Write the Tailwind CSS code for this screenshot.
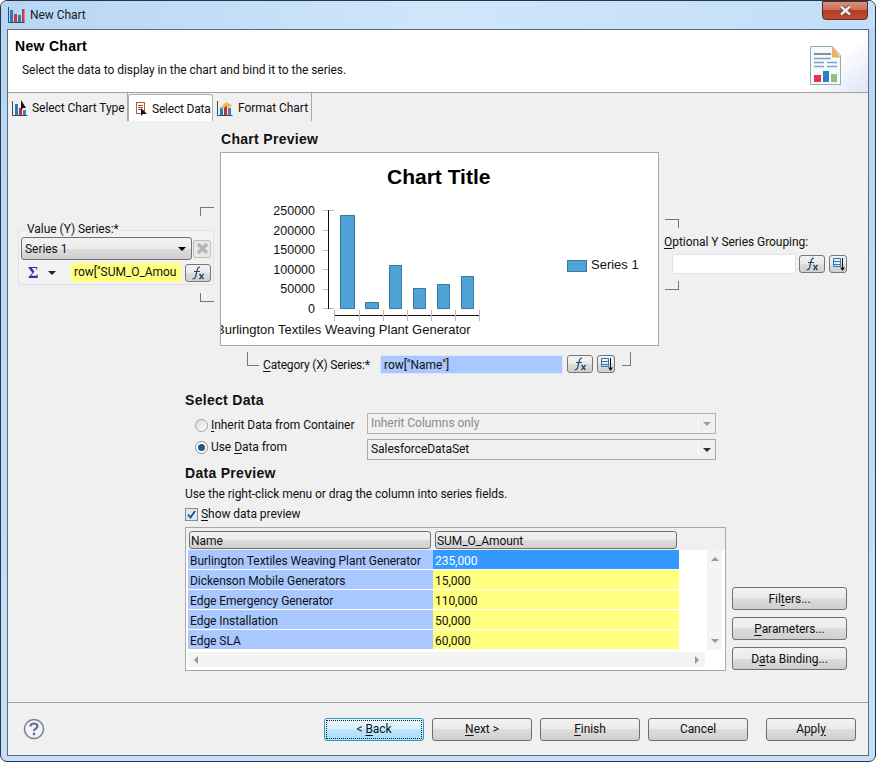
<!DOCTYPE html>
<html><head><meta charset="utf-8"><script src="https://cdn.jsdelivr.net/npm/@tailwindcss/browser@4"></script></head>
<body class="m-0 bg-white">
<div class="w-[876px] h-[762px] overflow-hidden flex flex-col rounded-[7px] border border-[#2a3444] bg-gradient-to-b from-[#b5d6f5] to-[#c5e0f8] font-['Roboto',sans-serif] text-[12px] tracking-[-0.05px] text-[#111]">
  <div class="h-[28px] shrink-0 flex items-center pl-[7px] pr-[7px] bg-gradient-to-r from-[#b6d6f4] via-[#cfe6fb] to-[#c2def8]">
    <svg width="17" height="16" viewBox="0 0 17 16"><path d="M.5 0v15.500h16" fill="none" stroke="#3a4a60"/><rect x="2" y="3" width="3" height="12" fill="#2a7ac0"/><rect x="6" y="7" width="3" height="8" fill="#c8403a"/><rect x="10" y="8" width="3" height="7" fill="#3a78b8"/><rect x="14" y="2" width="2.500" height="13" fill="#c8403a"/></svg>
    <span class="ml-[5px] text-[#1a1a1a]">New Chart</span>
    <div class="ml-auto -mt-[9px] w-[46px] h-[19px] rounded-b-[4px] border border-[#5a2a24] bg-[linear-gradient(#d9907e_0%,#cf6f58_45%,#b83a22_50%,#c04a32_100%)] flex items-center justify-center">
      <svg width="15" height="11" viewBox="0 0 15 11"><path d="M3 1.500l9 8M12 1.500l-9 8" stroke="#5a3a3a" stroke-width="4"/><path d="M3 1.500l9 8M12 1.500l-9 8" stroke="#eee" stroke-width="2.400"/></svg>
    </div>
  </div>
  <div class="mx-[6px] w-[862px] h-[727px] shrink-0 border border-[#5f6c7c] bg-[#f0f0f0] flex flex-col">
    <div class="h-[62px] bg-white border-b border-[#a0a0a0] flex shrink-0 box-content">
      <div class="pl-[7px] pt-[8px] flex-1">
        <div class="font-bold font-['Liberation_Sans',sans-serif] text-[14px] tracking-[0.3px] leading-[16px] text-black">New Chart</div>
        <div class="ml-[7px] mt-[8px] leading-[16px]">Select the data to display in the chart and bind it to the series.</div>
      </div>
      <div class="w-[70px] bg-gradient-to-br from-white via-white to-[#dfe5f2] flex items-end justify-start pl-[12px] pb-[7px]">
        <svg width="31" height="39" viewBox="0 0 31 39"><path d="M.5.500h22l8 9v29H.5z" fill="#f6fafa" stroke="#8fb0b0"/><path d="M22 .500l8.500 11H22z" fill="#eeb060"/><rect x="4" y="7" width="17" height="2" fill="#8a8a9c"/><path d="M4 12.500h17M4 16.500h10M17 16.500h10M4 20.500h10M17 20.500h10" stroke="#7aa4cc" stroke-width="1.500"/><rect x="4" y="29" width="7" height="7" fill="#e83050"/><rect x="13" y="25" width="6" height="11" fill="#2a80c8"/><rect x="21" y="28" width="6" height="8" fill="#90c080"/></svg>
      </div>
    </div>
    <div class="h-[28px] shrink-0 flex items-stretch bg-[#f0f0f0] pl-[1px]">
      <div class="w-[119px] flex items-center pl-[3px] pt-[1px] gap-[4px] border-r border-[#a8a8a8] whitespace-nowrap"><svg width="16" height="16" viewBox="0 0 16 16"><path d="M.5 1v14.500h15" fill="none" stroke="#3a4a60"/><rect x="3" y="4" width="3" height="11" fill="#2a7ac0"/><rect x="7" y="8" width="3" height="7" fill="#c03030"/><rect x="11" y="10" width="3" height="5" fill="#4080c0"/><path d="M9 0v10l2-2 3 0z" fill="#111"/></svg><span>Select Chart Type</span></div>
      <div class="w-[85px] mt-[1px] flex items-center pl-[6px] pt-[1px] gap-[3px] bg-white border border-b-0 border-[#b0b0b0] rounded-t-[3px] whitespace-nowrap"><svg width="14" height="16" viewBox="0 0 14 16"><rect x="1.500" y="1.500" width="8" height="11" fill="#fff" stroke="#b06030"/><path d="M3 4.500h5M3 6.500h5M3 8.500h3" stroke="#c04040"/><path d="M6 7v8l2-2 4 0z" fill="#111"/></svg><span class="tracking-[-0.2px]">Select Data</span></div>
      <div class="w-[99px] flex items-center pl-[4px] pt-[1px] gap-[5px] border-r border-[#a8a8a8] whitespace-nowrap"><svg width="16" height="16" viewBox="0 0 16 16"><path d="M.5 1v14.500h15" fill="none" stroke="#3a4a60"/><rect x="3" y="7" width="3" height="8" fill="#2a7ac0"/><rect x="7" y="6" width="3" height="9" fill="#c03030"/><rect x="11" y="8" width="3" height="7" fill="#4080c0"/><path d="M3 8l6-6 6 3-3 3-3-2-3 3z" fill="#e8c050"/></svg><span>Format Chart</span></div>
    </div>
    <div class="flex-1 flex flex-col min-h-0">
      <div class="h-[231px] shrink-0 flex">
        <div class="w-[212px] shrink-0 pl-[10px] pt-[86px]">
          <div class="w-[196px] flex justify-end"><div class="w-[14px] h-[9px] border-l border-t border-[#777]"></div></div>
          <div class="relative mt-[14px] w-[196px] h-[55px] border border-[#dde0e6] rounded-[2px] pl-[2px] pt-[6px] bg-[#f2f2f2]">
            <div class="absolute -top-[9px] left-[7px] px-[1px] bg-[#f0f0f0] leading-[14px]">Value (Y) Series:*</div>
            <div class="flex items-center gap-[1px]">
              <div class="w-[171px] h-[23px] rounded-[3px] border border-[#707070] bg-[linear-gradient(#f2f2f2_0%,#ebebeb_50%,#dddddd_50%,#cfcfcf_100%)] flex items-center pl-[3px] justify-between pr-[5px]"><span>Series 1</span><span class="w-0 h-0 border-x-[4px] border-x-transparent border-t-[4px] border-t-black"></span></div>
              <div class="w-[18px] h-[18px] rounded-[2px] border border-[#bdbdbd] bg-[#e8e8e8] flex items-center justify-center"><svg width="13" height="13" viewBox="0 0 13 13"><path d="M2 2l9 9M11 2l-9 9" stroke="#b5b5b5" stroke-width="3.500"/></svg></div>
            </div>
            <div class="flex items-center mt-[3px] h-[19px]">
              <span class="w-[22px] pl-[7px] text-[16px] font-bold text-[#3030a0] font-['Liberation_Serif',serif] leading-none shrink-0">Σ</span>
              <span class="ml-[5px] w-0 h-0 border-x-[4px] border-x-transparent border-t-[4px] border-t-[#222] shrink-0"></span>
              <div class="ml-[15px] w-[110px] h-[19px] bg-[#ffff80] pl-[3px] whitespace-nowrap leading-[19px] shrink-0">row["SUM_O_Amou</div>
              <div class="ml-[4px] w-[26px] h-[18px] shrink-0 rounded-[3px] border border-[#777] bg-[linear-gradient(#f2f2f2_0%,#ebebeb_50%,#dddddd_50%,#cfcfcf_100%)] flex items-center justify-center"><svg width="16" height="14" viewBox="0 0 16 14"><path d="M10 1c-2 0-2.500 1-3 3.500L5.500 11c-.4 1.500-1 2-3 2M4 5.500h6" fill="none" stroke="#24476e" stroke-width="1.200"/><path d="M9.500 8l4 5M13.500 8l-4 5" stroke="#24476e" stroke-width="1.300"/></svg></div>
            </div>
          </div>
          <div class="w-[196px] flex justify-end mt-[8px]"><div class="w-[14px] h-[9px] border-l border-b border-[#777]"></div></div>
        </div>
        <div class="w-[439px] shrink-0">
          <div class="font-bold font-['Liberation_Sans',sans-serif] text-[14px] tracking-[0.3px] leading-[16px] mt-[10px] pl-[1px] text-[#111]">Chart Preview</div>
          <div class="relative mt-[5px] w-[439px] h-[194px] bg-white border border-[#a8a8a8] font-['Liberation_Sans',sans-serif] tracking-normal overflow-hidden">
            <div class="absolute left-[166px] top-[12px] font-bold text-[21px] leading-[24px] text-black">Chart Title</div>
            <div class="absolute left-[44px] top-[49px] w-[50px] text-right text-[12.500px] text-[#111] leading-[19.600px]">250000<br>200000<br>150000<br>100000<br>50000<br>0</div>
            <svg class="absolute left-0 top-0" width="437" height="192" viewBox="0 0 437 192">
              <path d="M102 57.500h11M102 77.500h5M102 97.500h5M102 116.500h5M102 136.500h5M102 155.500h11" stroke="#bbb" fill="none"/>
              <path d="M107.500 57v99" stroke="#111" fill="none"/>
              <path d="M113 162.500h145" stroke="#111" fill="none"/>
              <path d="M113.500 157v11M138.500 157v11M162.500 157v11M186.500 157v11M210.500 157v11M234.500 157v11M258.500 157v11" stroke="#bbb" fill="none"/>
              <g fill="#4fa3d9" stroke="#3d789f"><rect x="119.500" y="62.500" width="14" height="93"/><rect x="144.500" y="149.500" width="13" height="6"/><rect x="168.500" y="112.500" width="12" height="43"/><rect x="192.500" y="135.500" width="12" height="20"/><rect x="216.500" y="131.500" width="12" height="24"/><rect x="240.500" y="123.500" width="12" height="32"/></g>
              <rect x="346.500" y="107.500" width="19" height="11" fill="#4fa3d9" stroke="#3d789f"/>
            </svg>
            <div class="absolute left-[-5px] top-[168px] text-[13px] leading-[18px] whitespace-nowrap text-[#111]">Burlington Textiles Weaving Plant Generator</div>
            <div class="absolute left-[370px] top-[104px] text-[13px] leading-[16px] whitespace-nowrap text-[#111]">Series 1</div>
          </div>
        </div>
        <div class="pl-[6px] pt-[98px] flex-1">
          <div class="w-[14px] h-[9px] border-r border-t border-[#777]"></div>
          <div class="mt-[6px] -ml-[1px] leading-[16px] whitespace-nowrap"><u class="underline-offset-2">O</u>ptional Y Series Grouping:</div>
          <div class="mt-[4px] pl-[7px] flex items-center">
            <div class="w-[124px] h-[20px] bg-white border border-[#dfe3e8] rounded-[2px] shrink-0"></div>
            <div class="ml-[3px] w-[26px] h-[18px] shrink-0 rounded-[3px] border border-[#777] bg-[linear-gradient(#f2f2f2_0%,#ebebeb_50%,#dddddd_50%,#cfcfcf_100%)] flex items-center justify-center"><svg width="16" height="14" viewBox="0 0 16 14"><path d="M10 1c-2 0-2.500 1-3 3.500L5.500 11c-.4 1.500-1 2-3 2M4 5.500h6" fill="none" stroke="#24476e" stroke-width="1.200"/><path d="M9.500 8l4 5M13.500 8l-4 5" stroke="#24476e" stroke-width="1.300"/></svg></div>
            <div class="ml-[4px] w-[18px] h-[18px] shrink-0 rounded-[3px] border border-[#777] bg-[linear-gradient(#f2f2f2_0%,#ebebeb_50%,#dddddd_50%,#cfcfcf_100%)] flex items-center justify-center"><svg width="14" height="15" viewBox="0 0 14 15"><path d="M2.500 1.500h7v8h-7zM2.500 4.500h7M2.500 7.500h7" fill="none" stroke="#2a7ab8"/><path d="M11.500 1v10" stroke="#111"/><path d="M9 10.500h5l-2.500 3.500z" fill="#111"/></svg></div>
          </div>
          <div class="mt-[7px] w-[14px] h-[9px] border-r border-b border-[#777]"></div>
        </div>
      </div>
      <div class="h-[27px] shrink-0 flex pl-[239px]">
        <div class="w-[12px] h-[14px] border-l border-b border-[#777] shrink-0"></div>
        <div class="ml-[4px] pt-[5px] leading-[16px] w-[117px] shrink-0 whitespace-nowrap tracking-[-0.2px]"><u class="underline-offset-2">C</u>ategory (X) Series:*</div>
        <div class="h-[19px] w-[183px] mt-[3px] shrink-0 bg-[#a8c8ff] pl-[3px] leading-[18px] border border-[#dde6f4]">row["Name"]</div>
        <div class="ml-[4px] mt-[3px] w-[26px] h-[18px] shrink-0 rounded-[3px] border border-[#777] bg-[linear-gradient(#f2f2f2_0%,#ebebeb_50%,#dddddd_50%,#cfcfcf_100%)] flex items-center justify-center"><svg width="16" height="14" viewBox="0 0 16 14"><path d="M10 1c-2 0-2.500 1-3 3.500L5.500 11c-.4 1.500-1 2-3 2M4 5.500h6" fill="none" stroke="#24476e" stroke-width="1.200"/><path d="M9.500 8l4 5M13.500 8l-4 5" stroke="#24476e" stroke-width="1.300"/></svg></div>
        <div class="ml-[4px] mt-[3px] w-[18px] h-[18px] shrink-0 rounded-[3px] border border-[#777] bg-[linear-gradient(#f2f2f2_0%,#ebebeb_50%,#dddddd_50%,#cfcfcf_100%)] flex items-center justify-center"><svg width="14" height="15" viewBox="0 0 14 15"><path d="M2.500 1.500h7v8h-7zM2.500 4.500h7M2.500 7.500h7" fill="none" stroke="#2a7ab8"/><path d="M11.500 1v10" stroke="#111"/><path d="M9 10.500h5l-2.500 3.500z" fill="#111"/></svg></div>
        <div class="ml-[7px] w-[9px] h-[14px] border-r border-b border-[#777] shrink-0"></div>
      </div>
      <div class="pl-[177px] pt-[13px]">
        <div class="font-bold font-['Liberation_Sans',sans-serif] text-[14px] tracking-[0.3px] leading-[16px]">Select Data</div>
        <div class="flex mt-[5px] w-[531px] items-start">
          <div class="w-[182px] shrink-0 pl-[10px] pt-[1px]">
            <div class="flex items-center h-[22px] gap-[3px]"><span class="w-[13px] h-[13px] rounded-full border border-[#a0a0a0] bg-gradient-to-br from-[#dcdcdc] to-white"></span><span><u class="underline-offset-2">I</u>nherit Data from Container</span></div>
            <div class="flex items-center h-[22px] gap-[3px]"><span class="w-[13px] h-[13px] rounded-full border border-[#8a8a8a] bg-white flex items-center justify-center"><span class="w-[7px] h-[7px] rounded-full bg-[#1c5a88]"></span></span><span>Use <u class="underline-offset-2">D</u>ata from</span></div>
          </div>
          <div class="flex-1">
            <div class="h-[21px] border border-[#b0b0b0] bg-[#f0f0f0] text-[#8a8a8a] pl-[3px] flex items-center justify-between"><span class="-mt-[2px]">Inherit Columns only</span><span class="w-[17px] h-full border-l border-[#fafafa] flex items-center justify-center"><span class="w-0 h-0 border-x-[4px] border-x-transparent border-t-[4px] border-t-[#a0a0a0]"></span></span></div>
            <div class="mt-[5px] h-[21px] border border-[#a8a8a8] bg-[#f0f0f0] pl-[3px] flex items-center justify-between"><span class="-mt-[2px]">SalesforceDataSet</span><span class="w-[17px] h-full border-l border-[#fafafa] flex items-center justify-center"><span class="w-0 h-0 border-x-[4px] border-x-transparent border-t-[4px] border-t-[#333]"></span></span></div>
          </div>
        </div>
        <div class="font-bold font-['Liberation_Sans',sans-serif] text-[14px] tracking-[0.3px] leading-[16px] mt-[5px]">Data Preview</div>
        <div class="leading-[16px] mt-[5px]">Use the right-click menu or drag the column into series fields.</div>
        <div class="flex items-center gap-[3px] h-[18px] mt-[3px]"><span class="w-[13px] h-[13px] border border-[#8a8a8a] bg-[#dce8f4] flex items-center justify-center"><svg width="11" height="11" viewBox="0 0 11 11"><path d="M2 5.500l2.500 3L9 2" fill="none" stroke="#2a4a8a" stroke-width="1.800"/></svg></span><span><u class="underline-offset-2">S</u>how data preview</span></div>
        <div class="flex mt-[4px] items-end">
          <div class="w-[541px] h-[144px] shrink-0 border border-[#a8a8a8] bg-white pl-[2px] flex flex-col">
            <div class="flex gap-[4px] h-[22px] shrink-0 bg-[#f0f0f0] -ml-[2px] pl-[3px] pt-[3px]">
              <div class="w-[242px] h-[18px] rounded-[3px] border border-[#707070] bg-[linear-gradient(#f2f2f2_0%,#ebebeb_50%,#dddddd_50%,#cfcfcf_100%)] pl-[1px] leading-[19px]">Name</div>
              <div class="w-[242px] h-[18px] rounded-[3px] border border-[#707070] bg-[linear-gradient(#f2f2f2_0%,#ebebeb_50%,#dddddd_50%,#cfcfcf_100%)] pl-[1px] leading-[19px]">SUM_O_Amount</div>
            </div>
            <div class="flex flex-1 min-h-0">
              <div class="w-[491px] flex flex-col shrink-0">
                <div class="h-[19px] flex mb-[1px]"><span class="w-[245px] bg-[#a8c8ff] pl-[2px] leading-[22px]">Burlington Textiles Weaving Plant Generator</span><span class="flex-1 bg-[#3399ff] text-white pl-[2px] leading-[22px]">235,000</span></div>
                <div class="h-[19px] flex mb-[1px]"><span class="w-[245px] bg-[#a8c8ff] pl-[2px] leading-[22px]">Dickenson Mobile Generators</span><span class="flex-1 bg-[#ffff80] pl-[2px] leading-[22px]">15,000</span></div>
                <div class="h-[19px] flex mb-[1px]"><span class="w-[245px] bg-[#a8c8ff] pl-[2px] leading-[22px]">Edge Emergency Generator</span><span class="flex-1 bg-[#ffff80] pl-[2px] leading-[22px]">110,000</span></div>
                <div class="h-[19px] flex mb-[1px]"><span class="w-[245px] bg-[#a8c8ff] pl-[2px] leading-[22px]">Edge Installation</span><span class="flex-1 bg-[#ffff80] pl-[2px] leading-[22px]">50,000</span></div>
                <div class="h-[19px] flex mb-[1px]"><span class="w-[245px] bg-[#a8c8ff] pl-[2px] leading-[22px]">Edge SLA</span><span class="flex-1 bg-[#ffff80] pl-[2px] leading-[22px]">60,000</span></div>
              </div>
              <div class="w-[28px] shrink-0"></div>
              <div class="w-[15px] h-[100px] bg-[#f4f4f4] flex flex-col items-center justify-between py-[7px]"><span class="w-0 h-0 border-x-[4px] border-x-transparent border-b-[4px] border-b-[#999]"></span><span class="w-0 h-0 border-x-[4px] border-x-transparent border-t-[4px] border-t-[#999]"></span></div>
            </div>
            <div class="h-[15px] w-[517px] mb-[3px] shrink-0 bg-[#f4f4f4] flex items-center justify-between px-[6px]"><span class="w-0 h-0 border-y-[4px] border-y-transparent border-r-[4px] border-r-[#999]"></span><span class="w-0 h-0 border-y-[4px] border-y-transparent border-l-[4px] border-l-[#999]"></span></div>
          </div>
          <div class="ml-[6px] flex flex-col gap-[7px] mb-[1px]">
            <div class="w-[115px] h-[23px] rounded-[3px] border border-[#707070] bg-[linear-gradient(#f2f2f2_0%,#ebebeb_50%,#dddddd_50%,#cfcfcf_100%)] text-center leading-[22px]">Fil<u class="underline-offset-2">t</u>ers...</div>
            <div class="w-[115px] h-[23px] rounded-[3px] border border-[#707070] bg-[linear-gradient(#f2f2f2_0%,#ebebeb_50%,#dddddd_50%,#cfcfcf_100%)] text-center leading-[22px]"><u class="underline-offset-2">P</u>arameters...</div>
            <div class="w-[115px] h-[23px] rounded-[3px] border border-[#707070] bg-[linear-gradient(#f2f2f2_0%,#ebebeb_50%,#dddddd_50%,#cfcfcf_100%)] text-center leading-[22px]">D<u class="underline-offset-2">a</u>ta Binding...</div>
          </div>
        </div>
      </div>
      <div class="mt-auto h-[53px] shrink-0 border-t border-[#a0a0a0] flex items-center pl-[15px]">
        <svg class="shrink-0" width="22" height="22" viewBox="0 0 22 22"><circle cx="11" cy="11" r="9.500" fill="#f4f4f8" stroke="#7a8498" stroke-width="1.600"/><path d="M7.500 8.500c0-2 1.500-3 3.500-3s3.500 1 3.500 3-3.500 2.500-3.500 4.500" fill="none" stroke="#6a7488" stroke-width="2.200"/><circle cx="11" cy="16" r="1.400" fill="#6a7488"/></svg>
        <div class="ml-[279px] w-[100px] h-[23px] shrink-0 rounded-[3px] border border-[#2e9ac8] bg-[linear-gradient(#eaf6fd_0%,#d9f0fc_50%,#bee6fd_50%,#a9dcf6_100%)] p-[1px]"><div class="h-full border border-dotted border-[#222] text-center leading-[17px]">&lt; <u class="underline-offset-2">B</u>ack</div></div>
        <div class="ml-[8px] w-[100px] h-[23px] shrink-0 rounded-[3px] border border-[#707070] bg-[linear-gradient(#f2f2f2_0%,#ebebeb_50%,#dddddd_50%,#cfcfcf_100%)] text-center leading-[21px]"><u class="underline-offset-2">N</u>ext &gt;</div>
        <div class="ml-[8px] w-[100px] h-[23px] shrink-0 rounded-[3px] border border-[#707070] bg-[linear-gradient(#f2f2f2_0%,#ebebeb_50%,#dddddd_50%,#cfcfcf_100%)] text-center leading-[21px]"><u class="underline-offset-2">F</u>inish</div>
        <div class="ml-[8px] w-[100px] h-[23px] shrink-0 rounded-[3px] border border-[#707070] bg-[linear-gradient(#f2f2f2_0%,#ebebeb_50%,#dddddd_50%,#cfcfcf_100%)] text-center leading-[21px]">Cancel</div>
        <div class="ml-[18px] w-[90px] h-[23px] shrink-0 rounded-[3px] border border-[#707070] bg-[linear-gradient(#f2f2f2_0%,#ebebeb_50%,#dddddd_50%,#cfcfcf_100%)] text-center leading-[21px]">Appl<u class="underline-offset-2">y</u></div>
      </div>
    </div>
  </div>
</div>
</body></html>
